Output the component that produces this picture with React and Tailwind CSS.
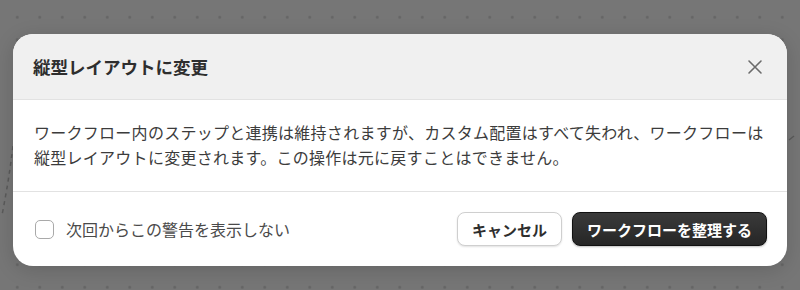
import React from "react";

export default function App() {
  return (
    <div
      className="relative w-[800px] h-[290px] overflow-hidden bg-[#767676] bg-[radial-gradient(circle,#666666_1.2px,transparent_1.6px)] bg-[length:22.5px_22.5px] bg-[position:6px_6px] flex items-start justify-center pt-[34px]"
      style={{ fontFamily: '"Noto Sans CJK JP", "Noto Sans", sans-serif' }}
    >
      <svg className="absolute left-0 top-0" width="800" height="290" viewBox="0 0 800 290">
        <path d="M13 146 C 10 170, 7 190, 2 215" fill="none" stroke="#5a5a5a" strokeWidth="1.5" strokeDasharray="4 4" />
        <path d="M789 140 L 794 136" fill="none" stroke="#5a5a5a" strokeWidth="1.5" />
      </svg>
      <div className="relative w-[774px] h-[232px] rounded-[20px] bg-white overflow-hidden shadow-[0_4px_20px_rgba(0,0,0,0.15)] flex flex-col">
        <div className="h-[66px] shrink-0 bg-[#f0f0f0] border-b border-[#e2e2e2] flex items-center justify-between pl-[20px] pr-[24px]">
          <h2 className="text-[17.5px] font-bold text-[#2e2e2e] leading-none">縦型レイアウトに変更</h2>
          <button className="w-[16px] h-[16px] flex items-center justify-center text-[#6b6b6b]">
            <svg width="16" height="16" viewBox="0 0 16 16" fill="none" stroke="currentColor" strokeWidth="1.6" strokeLinecap="round">
              <path d="M2 2 L14 14 M14 2 L2 14" />
            </svg>
          </button>
        </div>
        <div className="h-[92px] shrink-0 border-b border-[#e2e2e2] px-[21px] pt-[20px]">
          <p className="text-[16px] leading-[25px] text-[#3c3c3c] tracking-[0.27px] whitespace-nowrap">
            ワークフロー内のステップと連携は維持されますが、カスタム配置はすべて失われ、ワークフローは
            <br />
            縦型レイアウトに変更されます。この操作は元に戻すことはできません。
          </p>
        </div>
        <div className="flex-1 flex items-center justify-between pl-[22px] pr-[20px]">
          <label className="flex items-center gap-[12px]">
            <span className="w-[19px] h-[19px] rounded-[5px] border border-[#a9a9a9] bg-white" />
            <span className="text-[16px] text-[#4a4a4a] leading-none">次回からこの警告を表示しない</span>
          </label>
          <div className="flex items-center gap-[10px]">
            <button className="h-[34px] px-[14px] rounded-[8px] border border-[#cfcfcf] bg-white shadow-[0_1px_2px_rgba(0,0,0,0.12)] text-[15px] font-bold text-[#2e2e2e] leading-none">
              キャンセル
            </button>
            <button className="h-[34px] px-[14px] rounded-[8px] border border-[#111111] bg-[linear-gradient(#3a3a3a,#262626)] shadow-[0_1px_2px_rgba(0,0,0,0.25)] text-[15px] font-bold text-white leading-none">
              ワークフローを整理する
            </button>
          </div>
        </div>
      </div>
    </div>
  );
}
